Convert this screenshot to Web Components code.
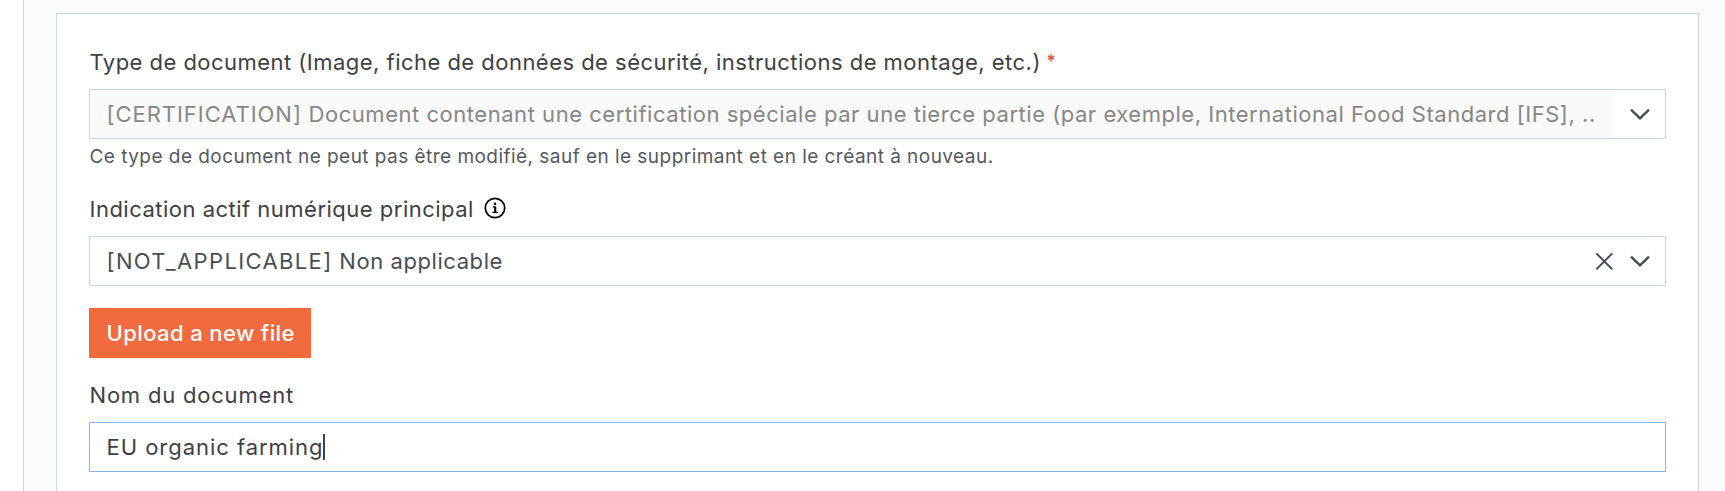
<!DOCTYPE html>
<html lang="fr">
<head>
<meta charset="utf-8">
<title>Document</title>
<style>
    html, body {
        margin: 0;
        height: 100%;
        overflow: hidden;
    }

    body {
        --border: #c5d5ea;
        --border-focus: #8ab4f0;
        --accent: #f26b3f;
        background: #fff;
        color: #3e4043;
        font: 22px/32px Inter, "Open Sans", sans-serif;
    }

    .hint {
        letter-spacing: 0.46px;
    }
</style>
</head>
<body>
<form-panel>
    <form-field style="--tracking: 0.47px">
        <span slot="label">Type de document (Image, fiche de données de sécurité, instructions de montage, etc.)</span>
        <required-mark slot="label"></required-mark>
        <select-box disabled style="--tracking: 0.53px"><span style="letter-spacing: 0.96px">[CERTIFICATION]</span> Document contenant une certification spéciale par une tierce partie (par exemple, International Food Standard [IFS], ..</select-box>
        <span slot="hint" class="hint">Ce type de document ne peut pas être modifié, sauf en le supprimant et en le créant à nouveau.</span>
    </form-field>
    <form-field style="--tracking: 0.49px">
        <span slot="label">Indication actif numérique principal</span>
        <info-icon slot="label"></info-icon>
        <select-box clearable style="--tracking: 0.57px"><span style="letter-spacing: 1.36px">[NOT_APPLICABLE]</span> Non applicable</select-box>
    </form-field>
    <upload-button>Upload a new file</upload-button>
    <form-field style="--tracking: 0.8px">
        <span slot="label">Nom du document</span>
        <text-box style="--tracking: 0.96px">EU organic farming</text-box>
    </form-field>
</form-panel>

<script>
(function () {
    'use strict';

    function define(name, html) {
        customElements.define(name, class extends HTMLElement {
            constructor() {
                super();
                this.attachShadow({ mode: 'open' }).innerHTML = html;
            }
        });
    }

    define('form-panel', `
        <style>
            :host {
                display: block;
                box-sizing: border-box;
                height: 100%;
                margin-left: 23px;
                padding: 13px 26px 0 32px;
                border-left: 1px solid var(--border);
                background: #fafbfd;
            }

            section {
                display: flex;
                flex-direction: column;
                align-items: stretch;
                box-sizing: border-box;
                height: 100%;
                padding: 32px 32px 0;
                border: 1px solid var(--border);
                border-bottom: 0;
                background: #fff;
            }
        </style>
        <section><slot></slot></section>
    `);

    define('form-field', `
        <style>
            :host {
                display: block;
            }

            .label {
                display: flex;
                height: 32px;
                margin-bottom: 11px;
                padding-left: 0.5px;
                letter-spacing: var(--tracking, normal);
                white-space: nowrap;
            }

            .hint {
                display: block;
                padding-left: 0.5px;
                color: #55595f;
                font-size: 19px;
                line-height: 27px;
            }

            .hint ::slotted(*) {
                display: block;
                padding: 4px 0 23px;
            }
        </style>
        <div class="label"><slot name="label"></slot></div>
        <slot></slot>
        <div class="hint"><slot name="hint"></slot></div>
    `);

    define('required-mark', `
        <style>
            :host {
                margin-left: 5.5px;
                color: #e2452f;
                font-size: 18px;
                line-height: 32px;
                letter-spacing: 0;
            }
        </style>*
    `);

    define('info-icon', `
        <style>
            :host {
                display: flex;
                align-items: center;
                margin-left: 10px;
                margin-top: -2px;
            }
        </style>
        <svg width="22" height="22" viewBox="0 0 22 22" fill="none" stroke="#000">
            <circle cx="11" cy="11" r="9.7" stroke-width="1.7"/>
            <path d="M11.2 9.6v5.6" stroke-width="2.1"/>
            <path d="M8.8 9.9h2.6M8.3 15.4h5.6" stroke-width="1.2"/>
            <circle cx="11" cy="6.9" r="1.3" fill="#000" stroke="none"/>
        </svg>
    `);

    define('select-box', `
        <style>
            :host {
                display: flex;
                box-sizing: border-box;
                height: 50px;
                border: 1px solid var(--border);
                color: #494e55;
                letter-spacing: var(--tracking, normal);
            }

            .value {
                flex: 1;
                min-width: 0;
                padding-left: 16.5px;
                line-height: 48px;
                white-space: nowrap;
                overflow: hidden;
            }

            .actions {
                display: flex;
                align-items: center;
                justify-content: flex-end;
                gap: 16px;
                width: 51px;
                padding-right: 15.5px;
                box-sizing: border-box;
            }

            .clear {
                display: none;
            }

            :host([disabled]) {
                color: #878787;
            }

            :host([disabled]) .value {
                background: #fafafa;
            }

            :host([clearable]) .actions {
                width: 90px;
            }

            :host([clearable]) .clear {
                display: block;
            }

            svg {
                fill: none;
                stroke: #454b54;
                stroke-width: 2;
            }
        </style>
        <div class="value"><slot></slot></div>
        <div class="actions">
            <svg class="clear" width="19" height="20" viewBox="0 0 19 20"><path d="M1.3 2.4l16 16M17.3 2.4l-16 16"/></svg>
            <svg width="20" height="20" viewBox="0 0 20 20"><path d="M1 5.6l9 8.8 9-8.8" stroke-width="2.3"/></svg>
        </div>
    `);

    define('upload-button', `
        <style>
            :host {
                align-self: flex-start;
                width: 222px;
                height: 50px;
                margin: 22px 0 21px;
            }

            button {
                width: 100%;
                height: 100%;
                padding: 0 0 0 17.5px;
                border: 0;
                background: var(--accent);
                color: #fff;
                font: inherit;
                font-weight: 500;
                letter-spacing: 0.4px;
                text-align: left;
            }
        </style>
        <button type="button"><slot></slot></button>
    `);

    define('text-box', `
        <style>
            :host {
                display: flex;
                align-items: center;
                box-sizing: border-box;
                height: 50px;
                padding-left: 16.5px;
                border: 1px solid var(--border-focus);
                letter-spacing: var(--tracking, normal);
            }

            .caret {
                width: 2px;
                height: 26px;
                background: #3e4043;
            }
        </style>
        <slot></slot><span class="caret"></span>
    `);
})();
</script>
</body>
</html>
